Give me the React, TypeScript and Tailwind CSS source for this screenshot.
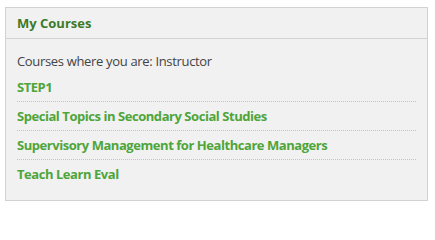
const courses = [
  'STEP1',
  'Special Topics in Secondary Social Studies',
  'Supervisory Management for Healthcare Managers',
  'Teach Learn Eval',
]

export default function App() {
  return (
    <div className="h-[205px] w-[435px] bg-white pl-[5px] pt-[7px] font-['Open_Sans',sans-serif]">
      <div className="w-[423px] border border-[#d2d2d2] bg-[#f1f1f1]">
        <div className="flex h-[31px] items-center border-b border-[#d2d2d2] px-[11px]">
          <h2 className="text-[13px] font-bold leading-[18px] text-[#3b7a2a]">My Courses</h2>
        </div>
        <div className="px-[11px] pb-[12px] pt-[13px] text-[13px] leading-[18px]">
          <p className="mb-[8px] tracking-[-0.33px] text-[#444]">Courses where you are: Instructor</p>
          <ul>
            {courses.map((course, i) => (
              <li
                key={course}
                className={
                  i < courses.length - 1
                    ? 'border-b border-dotted border-[#c4c4c4] pb-[5px] pt-[5px] first:pt-0'
                    : 'pt-[5px] pb-[5px]'
                }
              >
                <a href="#" className="font-bold tracking-[-0.45px] text-[#4ea53a]">
                  {course}
                </a>
              </li>
            ))}
          </ul>
        </div>
      </div>
    </div>
  )
}
